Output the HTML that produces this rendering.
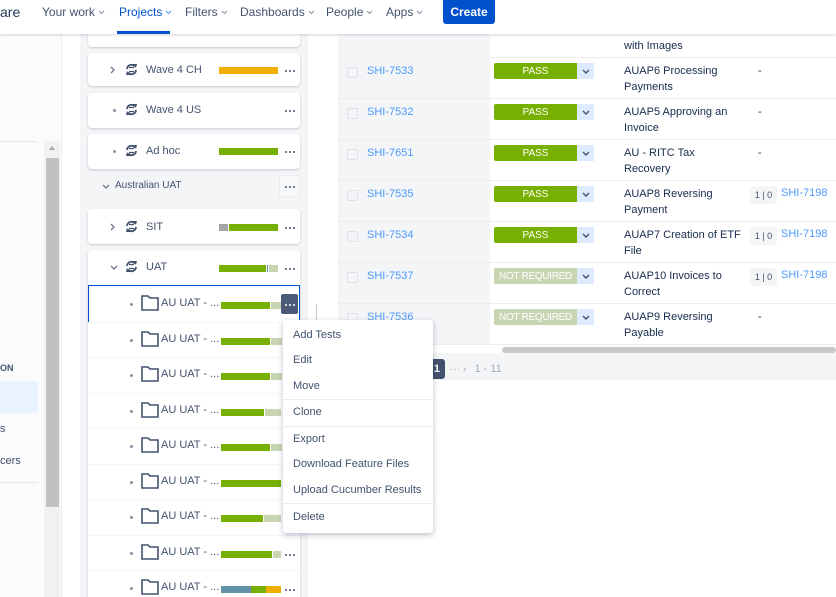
<!DOCTYPE html>
<html><head><meta charset="utf-8"><style>
*{box-sizing:border-box;margin:0;padding:0}
html,body{width:836px;height:597px;overflow:hidden}
body{background:#fff;font-family:"Liberation Sans",sans-serif;font-size:11px;color:#42526e;position:relative}
.a{position:absolute}
.nav{top:0;left:0;width:836px;height:34px;background:#fff;box-shadow:0 1px 3px rgba(9,30,66,.18);z-index:5}
.nav span{position:absolute;top:5px;font-size:12px;color:#42526e}
.nav span svg{margin-left:3px;vertical-align:1px}
.card{position:absolute;left:88px;width:212px;background:#fff;border-radius:4px;box-shadow:0 1px 2px rgba(9,30,66,.2)}
.lbl{position:absolute;font-size:11px;color:#42526e;white-space:nowrap}
.dots{position:absolute;width:2px;height:2px;border-radius:1px;background:#42526e;box-shadow:4px 0 #42526e,8px 0 #42526e}
.bar{position:absolute;height:7px}
.g{background:#77b000}.l{background:#c8d5b3}.o{background:#f0b000}.gr{background:#a5a5a5}.b{background:#6290a8}
.row{position:absolute;left:338px;width:498px;height:41px;border-bottom:1px solid #ebecf0}
.row .lft{position:absolute;left:0;top:0;width:152px;height:40px;background:#f4f5f7}
.cb{position:absolute;left:9px;top:9px;width:11px;height:11px;border:1px solid #dfe1e6;border-radius:2px;background:#f4f5f7}
.id{position:absolute;left:29px;top:7px;color:#4c9aff;font-size:11px}
.st{position:absolute;left:156px;top:5px;width:83px;height:16px;color:#fff;font-size:10px;text-align:center;line-height:17px;border-radius:2px 0 0 2px}
.dd{position:absolute;left:239px;top:5px;width:17px;height:16px;background:#deebff}
.sm{position:absolute;left:286px;top:5px;font-size:11px;line-height:16px;color:#172b4d;width:118px}
.dash{position:absolute;left:420px;top:7px;color:#172b4d}
.cnt{position:absolute;left:412px;top:5px;width:27px;height:18px;background:#f4f5f7;border-radius:3px;font-size:9px;line-height:18px;text-align:center;color:#42526e}
.lnk{position:absolute;left:443px;top:6px;color:#4c9aff}
.menu{left:283px;top:320px;width:150px;height:213px;background:#fff;border-radius:3px;box-shadow:0 2px 6px rgba(9,30,66,.28);z-index:6}
.menu div{position:absolute;left:10px;font-size:11px;color:#42526e}
.menu hr{position:absolute;left:0;width:150px;border:0;border-top:1px solid #ebecf0}
</style></head><body>
<div class="a nav">
<span style="left:0;font-size:14px;top:4px;color:#253858">are</span>
<span style="left:42px">Your work<svg width="7" height="5"><path d="M1 1l2.5 2.5L6 1" stroke="#8993a4" fill="none"/></svg></span>
<span style="left:119px;color:#0052cc">Projects<svg width="7" height="5"><path d="M1 1l2.5 2.5L6 1" stroke="#4c9aff" fill="none"/></svg></span>
<div class="a" style="left:117px;top:31px;width:53px;height:3px;background:#0052cc"></div>
<span style="left:185px">Filters<svg width="7" height="5"><path d="M1 1l2.5 2.5L6 1" stroke="#8993a4" fill="none"/></svg></span>
<span style="left:240px">Dashboards<svg width="7" height="5"><path d="M1 1l2.5 2.5L6 1" stroke="#8993a4" fill="none"/></svg></span>
<span style="left:326px">People<svg width="7" height="5"><path d="M1 1l2.5 2.5L6 1" stroke="#8993a4" fill="none"/></svg></span>
<span style="left:386px">Apps<svg width="7" height="5"><path d="M1 1l2.5 2.5L6 1" stroke="#8993a4" fill="none"/></svg></span>
<div class="a" style="left:443px;top:0;width:52px;height:24px;background:#0052cc;border-radius:0 0 3px 3px;color:#fff;font-size:12px;font-weight:bold;text-align:center;line-height:24px">Create</div>
</div>
<div class="a" style="left:0;top:34px;width:62px;height:563px;background:#fafbfc;border-right:1px solid #ebecf0"></div>
<div class="a" style="left:0;top:141px;width:37px;height:1px;background:#e4e6ea"></div>
<div class="a" style="left:44px;top:141px;width:16px;height:456px;background:#f1f1f1"></div>
<div class="a" style="left:49px;top:146px;width:0;height:0;border-left:3px solid transparent;border-right:3px solid transparent;border-bottom:4px solid #a3a3a3"></div>
<div class="a" style="left:46px;top:158px;width:13px;height:349px;background:#c1c1c1"></div>
<div class="a" style="left:0;top:363px;font-size:9px;font-weight:bold;color:#42526e">ON</div>
<div class="a" style="left:0;top:381px;width:38px;height:32px;background:#e9f2ff;border-radius:0 3px 3px 0"></div>
<div class="a" style="left:0;top:423px;font-size:11px">s</div>
<div class="a" style="left:0;top:455px;font-size:11px">cers</div>
<div class="a" style="left:0;top:482px;width:38px;height:1px;background:#e4e6ea"></div>
<div class="a" style="left:80px;top:34px;width:228px;height:563px;background:#f4f5f7"></div>
<div class="card" style="top:20px;height:27px"></div>
<div id="tree"></div>
<div class="a" style="left:316px;top:304px;width:1px;height:16px;background:#c1c7d0"></div>
<div class="a" style="left:338px;top:34px;width:498px;height:24px;border-bottom:1px solid #ebecf0"><div class="a" style="left:0;top:0;width:152px;height:24px;background:#f4f5f7"></div><div class="a" style="left:286px;top:6px;font-size:11px;color:#172b4d">with Images</div></div>
<div class="a" style="left:338px;top:345px;width:498px;height:8px;background:#fff"></div>
<div class="a" style="left:502px;top:347px;width:334px;height:6px;background:#c9c9c9;border-radius:3px"></div>
<div class="a" style="left:338px;top:353px;width:498px;height:27px;background:#f4f5f7"></div>
<div class="a" style="left:426px;top:359px;width:19px;height:20px;background:#42526e;border-radius:3px;color:#fff;font-size:11px;font-weight:bold;line-height:20px;text-align:right;padding-right:5px">1</div>
<div class="a" style="left:450px;top:363px;color:#a5adba;font-size:10px">··· ›&nbsp;&nbsp; <span style="font-size:11px">1 - 11</span></div>
<div id="rows"></div>
<div class="a menu">
<div style="top:9px">Add Tests</div><div style="top:34px">Edit</div><div style="top:60px">Move</div>
<hr style="top:79px"><div style="top:86px">Clone</div>
<hr style="top:106px"><div style="top:113px">Export</div><div style="top:138px">Download Feature Files</div><div style="top:164px">Upload Cucumber Results</div>
<hr style="top:183px"><div style="top:191px">Delete</div>
</div>
<script>
function cyc(x,y){return '<svg class="a" style="left:'+x+'px;top:'+y+'px" width="15" height="15" viewBox="0 0 15 15"><g fill="none" stroke="#42526e" stroke-width="1.8"><path d="M3 7A4.5 4.5 0 0 1 11 4.5"/><path d="M12 8A4.5 4.5 0 0 1 4 10.5"/></g><path d="M9 2l4 0-1 4z" fill="#42526e"/><path d="M6 13l-4 0 1-4z" fill="#42526e"/><path d="M5 5.5h5M5 9.5h5" stroke="#42526e" stroke-width="1.3"/></svg>';}
function dots(x,y,c){return '<div class="dots" style="left:'+x+'px;top:'+y+'px'+(c?';background:'+c+';box-shadow:4px 0 '+c+',8px 0 '+c:'')+'"></div>';}
var t='';
function card(top,h,exp,lbl,cy,bars){
 t+='<div class="card" style="top:'+top+'px;height:'+h+'px"></div>';
 if(exp=='>')t+='<svg class="a" style="left:110px;top:'+(cy-4)+'px" width="6" height="8"><path d="M1 1l3 3-3 3" stroke="#6b778c" fill="none" stroke-width="1.3"/></svg>';
 else if(exp=='v')t+='<svg class="a" style="left:110px;top:'+(cy-2)+'px" width="8" height="6"><path d="M1 1l3 3 3-3" stroke="#6b778c" fill="none" stroke-width="1.3"/></svg>';
 else t+='<div class="a" style="left:113px;top:'+(cy-1)+'px;width:3px;height:3px;border-radius:2px;background:#8993a4"></div>';
 t+=cyc(124,cy-8)+'<div class="lbl" style="left:146px;top:'+(cy-6)+'px">'+lbl+'</div>';
 t+=bars+dots(285,cy,0);
}
function b(c,x,w,y){return '<div class="bar '+c+'" style="left:'+x+'px;top:'+(y-3)+'px;width:'+w+'px"></div>';}
card(53,33,'>','Wave 4 CH',70,b('o',219,59,70));
card(93,35,'.','Wave 4 US',110,'');
card(134,35,'.','Ad hoc',151,b('g',219,59,151));
t+='<svg class="a" style="left:102px;top:184px" width="8" height="6"><path d="M1 1l3 3 3-3" stroke="#6b778c" fill="none" stroke-width="1.3"/></svg><div class="lbl" style="left:115px;top:180px;font-size:10px">Australian UAT</div>';
t+='<div class="a" style="left:279px;top:175px;width:21px;height:22px;border:1px solid #ebecf0;background:#f7f8f9"></div>'+dots(285,186,0);
card(209,35,'>','SIT',227,b('gr',219,9,227)+b('g',229,49,227));
t+='<div class="card" style="top:250px;height:360px"></div>';
t+='<svg class="a" style="left:110px;top:265px" width="8" height="6"><path d="M1 1l3 3 3-3" stroke="#6b778c" fill="none" stroke-width="1.3"/></svg>'+cyc(124,259)+'<div class="lbl" style="left:146px;top:261px">UAT</div>'+b('g',219,47,268)+'<div class="a" style="left:267px;top:265px;width:1px;height:7px;background:#6290a8"></div>'+b('l',269,9,268)+dots(285,268,0);
t+='<div class="a" style="left:88px;top:285px;width:212px;height:38px;border:1px solid #0052cc;background:#fff"></div>';
var ys=[304,340,375,411,446,482,517,553,588],
bars=[[49,11],[49,11],[49,11],[43,16],[49,11],[60,0],[42,17],[51,8],null];
ys.forEach(function(y,i){
 if(i>0)t+='<div class="a" style="left:88px;top:'+(y-18)+'px;width:212px;height:1px;background:#f4f5f7"></div>';
 t+='<div class="a" style="left:130px;top:'+(y-1)+'px;width:3px;height:3px;border-radius:2px;background:#8993a4"></div>';
 t+='<svg class="a" style="left:140px;top:'+(y-10)+'px" width="20" height="18"><path d="M2 2h6l2 2h8v12H2z" fill="none" stroke="#42526e" stroke-width="1.6"/></svg>';
 t+='<div class="lbl" style="left:161px;top:'+(y-7)+'px">AU UAT - ...</div>';
 var bb=bars[i];
 if(bb){t+=b('g',221,bb[0],y+1);if(bb[1])t+=b('l',222+bb[0],bb[1],y+1);}
 else t+=b('b',221,30,y+1)+b('g',251,15,y+1)+b('o',266,15,y+1);
 if(i>5)t+=dots(285,y+1,0);
});
t+='<div class="a" style="left:281px;top:294px;width:17px;height:20px;background:#4a5a78;border-radius:2px"></div>'+dots(285,304,'#fff');
document.getElementById('tree').innerHTML=t;
var r=[['SHI-7533','PASS','AUAP6 Processing Payments',0],['SHI-7532','PASS','AUAP5 Approving an Invoice',0],['SHI-7651','PASS','AU - RITC Tax Recovery',0],['SHI-7535','PASS','AUAP8 Reversing Payment',1],['SHI-7534','PASS','AUAP7 Creation of ETF File',1],['SHI-7537','NOT REQUIRED','AUAP10 Invoices to Correct',1],['SHI-7536','NOT REQUIRED','AUAP9 Reversing Payable',0]];
var h='';
r.forEach(function(x,i){
 var nr=x[1]!='PASS';
 h+='<div class="row" style="top:'+(58+i*41)+'px"><div class="lft"></div><div class="cb"></div><div class="id">'+x[0]+'</div><div class="st" style="background:'+(nr?'#c8d5b3':'#77b000')+(nr?';letter-spacing:-0.3px':'')+'">'+x[1]+'</div><div class="dd"><svg style="position:absolute;left:5px;top:6px" width="8" height="5"><path d="M1 1l3 3 3-3" stroke="#42526e" fill="none" stroke-width="1.4"/></svg></div><div class="sm">'+x[2]+'</div>'+(x[3]?'<div class="cnt">1 | 0</div><div class="lnk">SHI-7198</div>':'<div class="dash">-</div>')+'</div>';
});
document.getElementById('rows').innerHTML=h;
</script>
</body></html>
